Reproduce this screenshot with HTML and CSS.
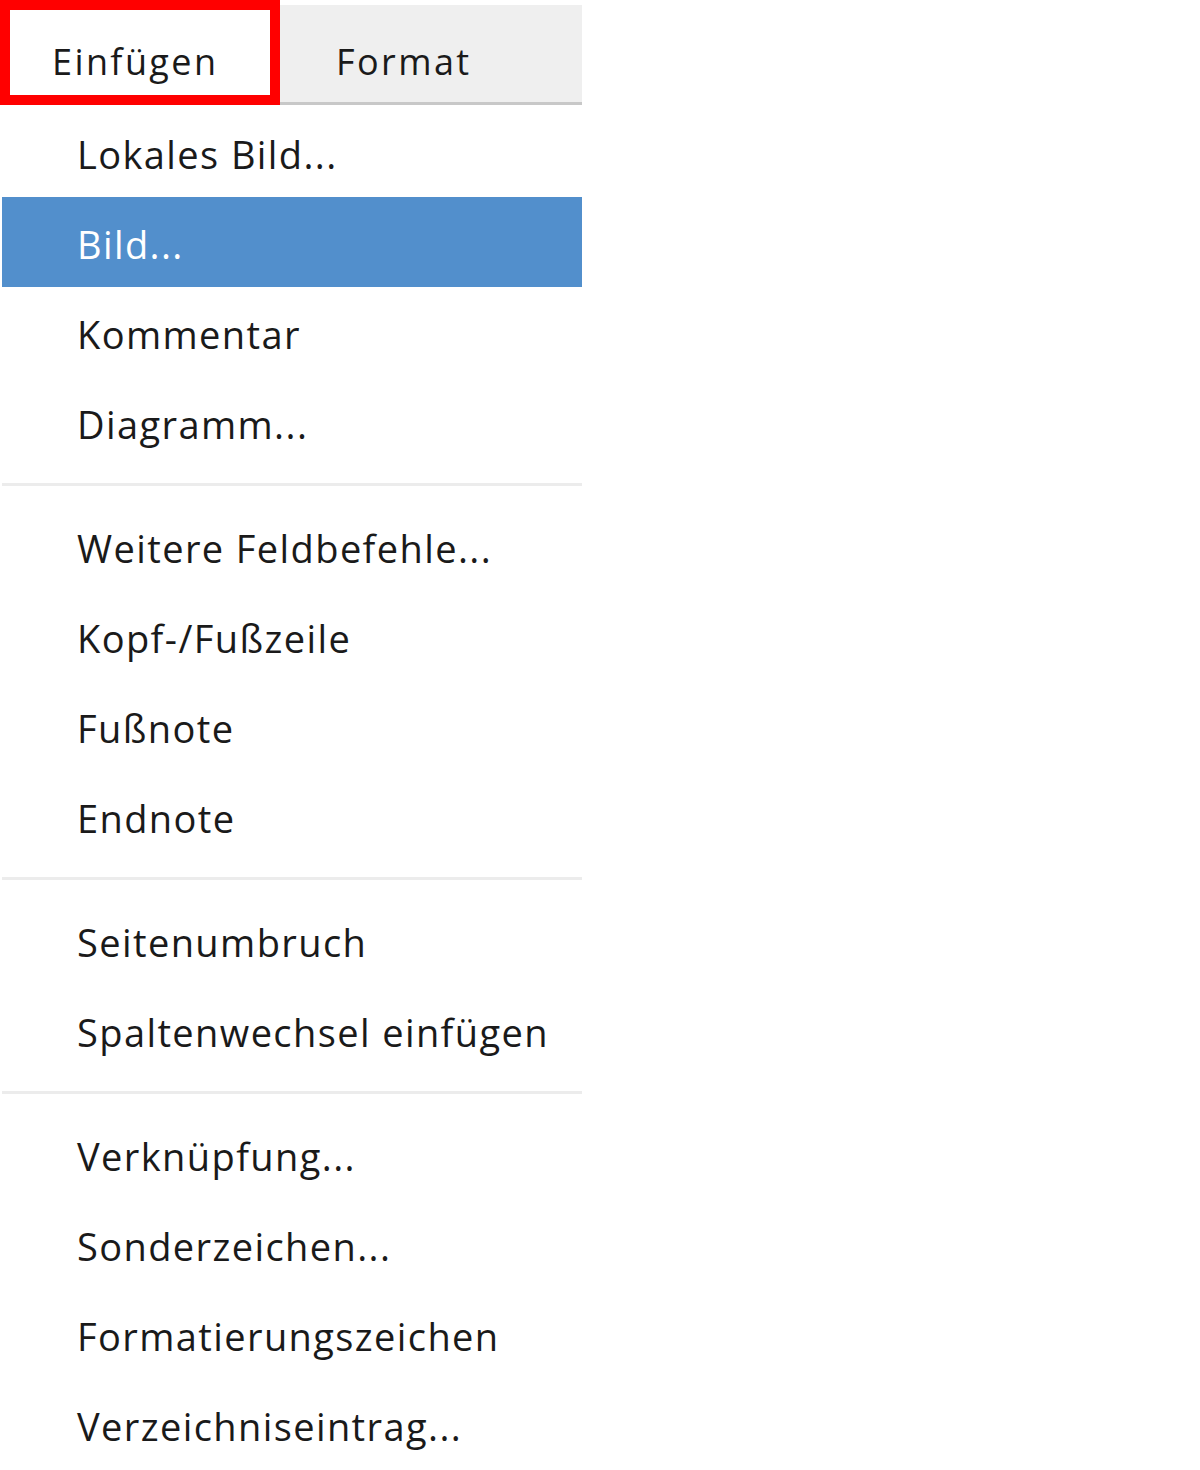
FILE: index.html
```html
<!DOCTYPE html>
<html lang="de">

<head>
    <meta charset="UTF-8">
    <meta name="viewport" content="width=device-width, initial-scale=1.0">
    <title>Einfügen</title>
    <link rel="stylesheet" href="styles.css">
</head>

<body>
    <div class="menubar">
        <div class="menubar-tab active">Einfügen</div>
        <div class="menubar-tab">Format</div>
    </div>
    <ul class="menu">
        <li class="menu-item">Lokales Bild...</li>
        <li class="menu-item selected">Bild...</li>
        <li class="menu-item">Kommentar</li>
        <li class="menu-item">Diagramm...</li>
        <li class="menu-separator"></li>
        <li class="menu-item">Weitere Feldbefehle...</li>
        <li class="menu-item">Kopf-/Fußzeile</li>
        <li class="menu-item">Fußnote</li>
        <li class="menu-item">Endnote</li>
        <li class="menu-separator"></li>
        <li class="menu-item">Seitenumbruch</li>
        <li class="menu-item">Spaltenwechsel einfügen</li>
        <li class="menu-separator"></li>
        <li class="menu-item">Verknüpfung...</li>
        <li class="menu-item">Sonderzeichen...</li>
        <li class="menu-item">Formatierungszeichen</li>
        <li class="menu-item">Verzeichniseintrag...</li>
    </ul>
</body>

</html>
```

FILE: styles.css
```css
body {
    margin: 0;
    background: #fff;
    font-family: "Open Sans", "Noto Sans", Arial, sans-serif;
    font-size: 38px;
    letter-spacing: 1.4px;
    color: #1a1a1a;
}

.menubar {
    display: flex;
    align-items: flex-start;
    width: 582px;
    font-size: 36px;
    letter-spacing: 2.4px;
}

.menubar-tab {
    box-sizing: border-box;
    width: 302px;
    height: 100px;
    margin-top: 5px;
    padding-left: 56px;
    padding-top: 16px;
    display: flex;
    align-items: center;
    background: #efefef;
    border-bottom: 3px solid #c8c8c8;
}

.menubar-tab.active {
    width: 280px;
    height: 105px;
    margin-top: 0;
    padding-left: 42px;
    padding-top: 18px;
    background: #fff;
    border: 10px solid #ff0000;
}

.menu {
    list-style: none;
    margin: 2px 0 0 2px;
    padding: 0;
    width: 580px;
}

.menu-item {
    height: 90px;
    padding-left: 75px;
    padding-top: 4px;
    box-sizing: border-box;
    display: flex;
    align-items: center;
}

.menu-item.selected {
    background: #528fcc;
    color: #fff;
}

.menu-separator {
    height: 34px;
    display: flex;
    align-items: center;
}

.menu-separator::after {
    content: "";
    display: block;
    width: 100%;
    height: 3px;
    background: #ececec;
}
```
